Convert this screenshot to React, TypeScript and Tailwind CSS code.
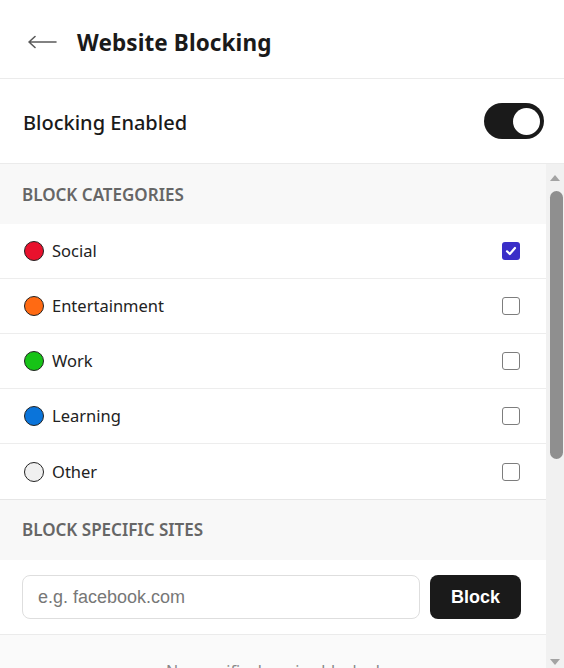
import React, { useState } from "react";

const categories = [
  { name: "Social", color: "#e8112d", checked: true },
  { name: "Entertainment", color: "#ff6a13", checked: false },
  { name: "Work", color: "#17c317", checked: false },
  { name: "Learning", color: "#0a74da", checked: false },
  { name: "Other", color: "#f0f0f0", checked: false },
];

function Checkbox({ checked, onChange }: { checked: boolean; onChange: () => void }) {
  return (
    <button
      onClick={onChange}
      className={
        checked
          ? "w-[18px] h-[18px] rounded-[3px] bg-[#3a2ec8] flex items-center justify-center"
          : "w-[18px] h-[18px] rounded-[3px] border-[1.5px] border-[#7d7d7d] bg-white"
      }
    >
      {checked && (
        <svg width="12" height="12" viewBox="0 0 12 12">
          <path d="M2 6.3 L4.8 9 L10 3" fill="none" stroke="white" strokeWidth="2.2" strokeLinecap="round" strokeLinejoin="round" />
        </svg>
      )}
    </button>
  );
}

export default function App() {
  const [cats, setCats] = useState(categories);
  const [enabled, setEnabled] = useState(true);
  return (
    <div className="w-[564px] h-[668px] flex flex-col bg-white text-[#1a1a1a] overflow-hidden" style={{ fontFamily: '"Noto Sans", "Open Sans", sans-serif' }}>
      <div className="h-[79px] shrink-0 flex items-center border-b border-[#ebebeb] pl-[28px] pt-[8px]">
        <svg width="29" height="14" viewBox="0 0 29 14" className="mr-[20px] -mt-[2px]">
          <path d="M1 7 H28 M1 7 L7 1.5 M1 7 L7 12.5" fill="none" stroke="#5a5a5a" strokeWidth="1.6" strokeLinecap="round" />
        </svg>
        <h1 className="text-[22.5px] font-bold tracking-[0.1px] leading-none">Website Blocking</h1>
      </div>
      <div className="h-[85px] shrink-0 flex items-center justify-between border-b border-[#ebebeb] pl-[23px] pr-[20px]">
        <span className="text-[20px] font-medium pt-[3px]">Blocking Enabled</span>
        <button
          onClick={() => setEnabled(!enabled)}
          className={`w-[60px] h-[36px] rounded-full flex items-center px-[4px] ${enabled ? "bg-[#1a1a1a] justify-end" : "bg-[#ccc] justify-start"}`}
        >
          <span className="w-[27px] h-[27px] rounded-full bg-white" />
        </button>
      </div>
      <div className="flex-1 flex min-h-0">
        <div className="flex-1 overflow-hidden">
          <div className="h-[60px] flex items-center bg-[#f8f8f8] pl-[22px] pt-[1px]">
            <span className="text-[17px] font-semibold text-[#666]">BLOCK CATEGORIES</span>
          </div>
          {cats.map((c, i) => (
            <div key={c.name} className={`h-[55px] flex items-center justify-between pl-[24px] pr-[26px] ${i < cats.length - 1 ? "border-b border-[#ededed]" : ""}`}>
              <div className="flex items-center gap-[8px]">
                <span className="w-[20px] h-[20px] rounded-full border border-[#222]" style={{ backgroundColor: c.color }} />
                <span className="text-[16.5px] text-[#222] pt-[1px]">{c.name}</span>
              </div>
              <Checkbox
                checked={c.checked}
                onChange={() => setCats(cats.map((x, j) => (j === i ? { ...x, checked: !x.checked } : x)))}
              />
            </div>
          ))}
          <div className="h-[61px] flex items-center bg-[#f8f8f8] border-t border-[#e6e6e6] pl-[22px]">
            <span className="text-[17px] font-semibold text-[#666]">BLOCK SPECIFIC SITES</span>
          </div>
          <div className="h-[75px] flex items-center gap-[10px] pl-[22px] pr-[25px] border-b border-[#ebebeb]">
            <input
              placeholder="e.g. facebook.com"
              className="flex-1 min-w-0 h-[44px] rounded-[8px] border border-[#dedede] px-[15px] text-[18px] placeholder:text-[#777] outline-none"
              style={{ fontFamily: '"Liberation Sans", Arial, sans-serif' }}
            />
            <button
              className="w-[91px] h-[44px] rounded-[8px] bg-[#1a1a1a] text-white text-[18px] font-bold"
              style={{ fontFamily: '"Liberation Sans", Arial, sans-serif' }}
            >
              Block
            </button>
          </div>
          <div className="bg-[#fafafa] h-[414px] pt-[24px] flex justify-center">
            <span className="text-[16px] text-[#888]">No specific domains blocked</span>
          </div>
        </div>
        <div className="w-[18px] shrink-0 bg-[#f1f1f1] relative">
          <svg width="10" height="6" viewBox="0 0 10 6" className="absolute left-[4px] top-[11px]">
            <path d="M0 6 L5 0 L10 6 Z" fill="#a3a3a3" />
          </svg>
          <div className="absolute left-[4px] w-[13px] top-[27px] h-[268px] rounded-full bg-[#8f8f8f]" />
          <svg width="10" height="6" viewBox="0 0 10 6" className="absolute left-[4px] bottom-[3px]">
            <path d="M0 0 L10 0 L5 6 Z" fill="#a3a3a3" />
          </svg>
        </div>
      </div>
    </div>
  );
}
